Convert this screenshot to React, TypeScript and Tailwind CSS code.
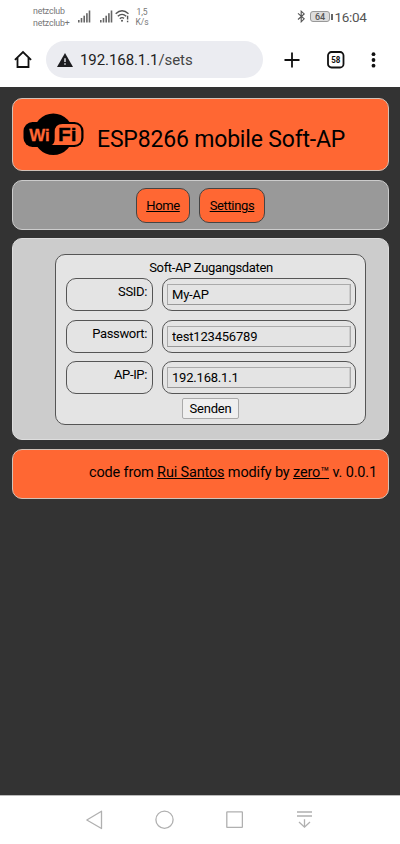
import React from 'react';

function Signal() {
  return (
    <svg width="13" height="13" viewBox="0 0 13 13" fill="#666">
      <rect x="0" y="10" width="1.6" height="2.5" />
      <rect x="2.7" y="8" width="1.6" height="4.5" />
      <rect x="5.4" y="5.7" width="1.6" height="6.8" />
      <rect x="8.1" y="3.2" width="1.6" height="9.3" />
      <rect x="10.7" y="0.5" width="1.6" height="12" />
    </svg>
  );
}

function StatusBar() {
  return (
    <div className="flex h-[34px] items-start text-[#777]">
      <div className="ml-[33px] w-[45px] pt-[5px] text-[8.8px] leading-[12px] tracking-[-0.18px]">
        <div>netzclub</div>
        <div>netzclub+</div>
      </div>
      <div className="flex pt-[10px]">
        <Signal />
        <div className="ml-[9px]"><Signal /></div>
        <svg className="ml-[2px]" width="15" height="13" viewBox="0 0 15 13" fill="none" stroke="#555" strokeWidth="1.4">
          <path d="M.7 3.7Q7-2 13.5 3.7M2.8 6.3Q7 2.5 11.2 6.2M4.8 8.7Q7 6.7 9 8.4" />
          <circle cx="7" cy="10.7" r="1" fill="#555" stroke="none" />
          <path d="M12.6 5.8v3.8M12.6 10.8v1.5" />
        </svg>
      </div>
      <div className="ml-[4px] w-[16px] pt-[7px] text-center text-[8.5px] leading-[10px]">
        <div>1,5</div>
        <div>K/s</div>
      </div>
      <svg className="mt-[10px] ml-[147px]" width="9" height="13" viewBox="0 0 9 13" fill="none" stroke="#555" strokeWidth="1.1">
        <path d="M1 3.3l6.2 5.5L4.2 11.8V1.2l3 2.7L1 9.5" />
      </svg>
      <div className="mt-[11px] ml-[4px] flex items-center">
        <div className="flex h-[11px] w-[20px] items-center justify-center rounded-[3px] border border-[#999] bg-[#ddd] text-[9px] leading-[10px] font-medium text-[#555]">64</div>
        <div className="ml-px h-[6px] w-[1.5px] bg-[#666]" />
      </div>
      <div className="mt-[8px] ml-[2px] text-[13.5px] leading-[18px] tracking-[-0.3px] whitespace-nowrap text-[#555]">16:04</div>
    </div>
  );
}

function BrowserBar() {
  return (
    <div className="flex h-[53px] items-start pt-[7px]">
      <svg className="mt-[9px] ml-[14px]" width="18" height="19" viewBox="0 0 18 19" fill="none" stroke="#111" strokeWidth="1.8">
        <path d="M.9 9.8L9 2l8.1 7.8M3.5 8v9h11V8" />
      </svg>
      <div className="ml-[14px] flex h-[37px] w-[217px] items-center rounded-full bg-[#ebecf1]">
        <svg className="ml-[11px]" width="16" height="14" viewBox="0 0 16 14">
          <path d="M8 0l8 14H0z" fill="#1c1c1f" />
          <path d="M8 5.2v3.8M8 10.2v1.6" stroke="#ebecf1" strokeWidth="1.4" />
        </svg>
        <span className="ml-[7px] pt-[2px] text-[15px] tracking-[-0.08px] text-[#222]">192.168.1.1<span className="text-[#444]">/sets</span></span>
      </div>
      <svg className="mt-[11px] ml-[21px]" width="16" height="16" viewBox="0 0 16 16" stroke="#111" strokeWidth="1.8">
        <path d="M8 .5v15M.5 8h15" />
      </svg>
      <svg className="mt-[10px] ml-[27px]" width="18" height="18" viewBox="0 0 18 18">
        <rect x="1" y="1" width="15.5" height="15.5" rx="3.5" fill="none" stroke="#111" strokeWidth="1.8" />
        <text x="4.2" y="12" fontSize="9" fontWeight="700" textLength="9.2" lengthAdjust="spacingAndGlyphs" fill="#111" fontFamily="Roboto, sans-serif">58</text>
      </svg>
      <svg className="mt-[11px] ml-[26px]" width="5" height="16" viewBox="0 0 5 16" fill="#111">
        <circle cx="2.5" cy="2.2" r="1.9" />
        <circle cx="2.5" cy="8" r="1.9" />
        <circle cx="2.5" cy="13.7" r="1.9" />
      </svg>
    </div>
  );
}

function WifiLogo() {
  return (
    <svg className="mt-[14px] ml-[10px]" width="61" height="43" viewBox="0 0 61 43">
      <ellipse cx="30.3" cy="21.3" rx="20" ry="20.8" fill="#000" />
      <rect x=".5" y="9" width="60" height="25" rx="9" fill="#000" />
      <path d="M28.5 32q3.2-1.2 3.2-6.5V19q0-8 7.8-8H50.8q7.5 0 7.5 7.5v6q0 7.5-7.5 7.5z" fill="#ff6733" />
      <text x="6.3" y="27.5" fontSize="17" fontWeight="700" fill="#ff6733" stroke="#ff6733" strokeWidth=".3" textLength="20.5" lengthAdjust="spacingAndGlyphs" fontFamily="Liberation Sans, Arial, sans-serif">Wi</text>
      <text x="35" y="27.5" fontSize="17.5" fontWeight="700" fill="#000" stroke="#000" strokeWidth=".3" textLength="18.5" lengthAdjust="spacingAndGlyphs" fontFamily="Liberation Sans, Arial, sans-serif">Fi</text>
    </svg>
  );
}

function Field({ label, value }: { label: string; value: string }) {
  return (
    <div className="flex h-[33px] justify-between">
      <div className="w-[87px] rounded-[10px] border border-[#555] pt-[4px] pr-[5px] text-right text-[13px] leading-[17px] tracking-[-0.35px]">{label}</div>
      <div className="w-[194px] rounded-[10px] border border-[#555] p-[5px] pr-[4px] pl-[4px]">
        <input
          className="block h-[21px] w-full border border-[#aaa] border-b-[#999] bg-[#e4e4e4] px-[4px] text-[13px] tracking-[-0.2px] text-black shadow-[inset_-1px_0_0_#ccc] outline-none"
          defaultValue={value}
        />
      </div>
    </div>
  );
}

function NavigationBar() {
  return (
    <div className="flex h-[49px] items-start border-t border-[#bbb] bg-white pt-[14px]">
      <svg className="ml-[86px]" width="17" height="20" viewBox="0 0 17 20" fill="none" stroke="#b0b0b0" strokeWidth="1.3" strokeLinejoin="round">
        <path d="M.8 10L15.5 1.2v17.3z" />
      </svg>
      <svg className="ml-[52px]" width="19" height="20" viewBox="0 0 19 20" fill="none" stroke="#b0b0b0" strokeWidth="1.3">
        <circle cx="9.5" cy="9.7" r="8.6" />
      </svg>
      <svg className="ml-[52px]" width="17" height="20" viewBox="0 0 17 20" fill="none" stroke="#b0b0b0" strokeWidth="1.3">
        <rect x=".8" y="1.8" width="15.6" height="15.6" rx=".5" />
      </svg>
      <svg className="ml-[54px]" width="15" height="20" viewBox="0 0 15 20" fill="none" stroke="#b0b0b0" strokeWidth="1.3">
        <path d="M0 2h15M0 6h15M7.5 9.3v8M2 12l5.5 5.2L13 12" />
      </svg>
    </div>
  );
}

export default function App() {
  return (
    <div className="flex h-[844px] w-[400px] flex-col overflow-hidden bg-white font-['Roboto',sans-serif] text-black">
      <StatusBar />
      <BrowserBar />
      <main className="flex h-[708px] flex-col bg-[#333] pt-[11px] pr-[11px] pl-[12px]">
        <header className="flex h-[73px] shrink-0 rounded-[10px] border border-[#d1c2b8] bg-[#ff6733]">
          <WifiLogo />
          <h1 className="mt-[27px] ml-[13px] text-[23px] leading-[28px] tracking-[-0.18px] whitespace-nowrap">ESP8266 mobile Soft-AP</h1>
        </header>
        <nav className="mt-[9px] flex h-[50px] shrink-0 justify-center gap-[9px] rounded-[10px] border border-[#ccc] bg-[#999] pt-[7px]">
          <a className="flex h-[35px] w-[54px] items-center justify-center rounded-[10px] border border-[#444] bg-[#ff6733] text-[13px] tracking-[-0.35px] underline">Home</a>
          <a className="flex h-[35px] w-[66px] items-center justify-center rounded-[10px] border border-[#444] bg-[#ff6733] text-[13px] tracking-[-0.35px] underline">Settings</a>
        </nav>
        <section className="mt-[8px] h-[202px] shrink-0 rounded-[10px] border border-[#ddd] bg-[#ccc] pt-[15px] pl-[42px]">
          <form className="h-[171px] w-[311px] rounded-[10px] border border-[#555] bg-[#e4e4e4] pt-[4px] pr-[9px] pl-[10px]">
            <div className="h-[19px] text-center text-[13px] leading-[17px] tracking-[-0.35px]">Soft-AP Zugangsdaten</div>
            <div className="flex flex-col gap-[8.5px]">
              <Field label="SSID:" value="My-AP" />
              <Field label="Passwort:" value="test123456789" />
              <Field label="AP-IP:" value="192.168.1.1" />
            </div>
            <button type="button" className="mt-[4px] ml-[116px] block h-[21px] w-[57px] rounded-[2px] border border-[#aaa] bg-[#efefef] text-[13px] leading-[18px] tracking-[-0.2px]">Senden</button>
          </form>
        </section>
        <footer className="mt-[9px] h-[50px] shrink-0 rounded-[10px] border border-[#d1c2b8] bg-[#ff6733] pt-[14px] pr-[11px] text-right text-[14.5px] leading-[18px] tracking-[-0.16px] whitespace-nowrap">
          code from <a className="underline">Rui Santos</a> modify by <a className="underline">zero™</a> v. 0.0.1
        </footer>
      </main>
      <NavigationBar />
    </div>
  );
}
